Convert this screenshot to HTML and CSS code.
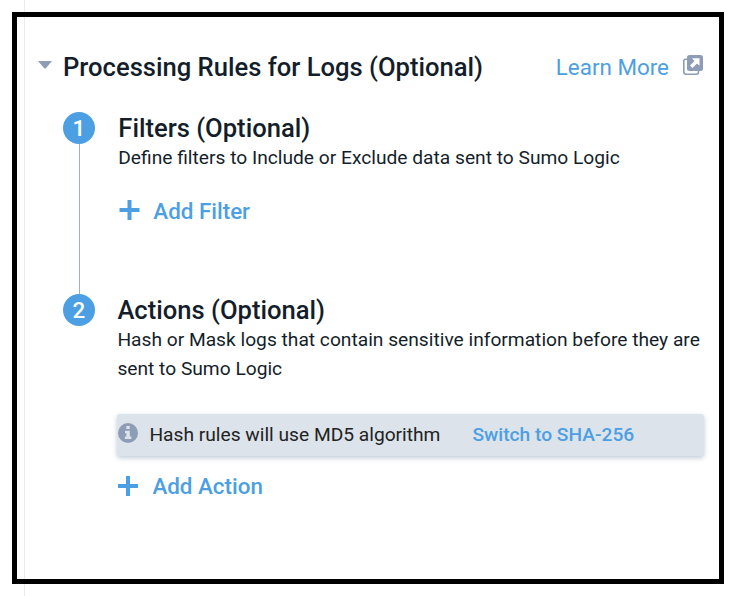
FILE: index.html
```html
<!DOCTYPE html>
<html lang="en">
<head>
<meta charset="utf-8">
<title>Processing Rules</title>
<link rel="stylesheet" href="styles.css">
</head>
<body>
<main class="panel">
  <header class="header">
    <svg class="caret" width="14" height="8" viewBox="0 0 14 8"><path d="M0 0H14L7.8 7.2Q7 8 6.2 7.2Z"/></svg>
    <h1 class="title">Processing Rules for Logs (Optional)</h1>
    <a class="learn">Learn More</a>
    <svg class="external" width="20" height="20" viewBox="0 0 20 20">
      <path d="M4 4.2H2.5Q.8 4.2.8 6V17Q.8 19.2 3 19.2H13.5Q15.5 19.2 15.5 17V16" fill="none" stroke="#8d9db5" stroke-width="1.6"/>
      <rect x="4" y="0" width="16" height="16" rx="2.5" fill="#8d9db5"/>
      <path d="M9 3.3H16.5V10.8L14 8.4L9.4 13L7 10.6L11.5 6Z" fill="#fff"/>
    </svg>
  </header>
  <section class="step first">
    <div class="rail"><span class="number">1</span><span class="line"></span></div>
    <div class="content">
      <h2 class="heading">Filters (Optional)</h2>
      <p class="text">Define filters to Include or Exclude data sent to Sumo Logic</p>
      <a class="add add-filter"><svg width="21" height="20" viewBox="0 0 21 20"><path d="M8.5 0h4v8h8v4h-8v8h-4v-8h-8V8h8z"/></svg><span>Add Filter</span></a>
    </div>
  </section>
  <section class="step second">
    <div class="rail"><span class="number">2</span></div>
    <div class="content">
      <h2 class="heading">Actions (Optional)</h2>
      <p class="text">Hash or Mask logs that contain sensitive information before they are<br>sent to Sumo Logic</p>
      <div class="notice">
        <svg class="info" width="20" height="20" viewBox="0 0 20 20"><circle cx="10" cy="10" r="10" fill="#8d9db5"/><path d="M8.4 3h3.3v3H8.4zM7 7.7h4.8v5.8h1.5v2.6H6.9v-2.6h1.5v-3.2H7z" fill="#dce3ea"/></svg>
        <span class="message">Hash rules will use MD5 algorithm</span>
        <a class="switch">Switch to SHA-256</a>
      </div>
      <a class="add add-action"><svg width="20" height="20" viewBox="0 0 20 20"><path d="M8 0h4v8h8v4h-8v8H8v-8H0V8h8z"/></svg><span>Add Action</span></a>
    </div>
  </section>
</main>
</body>
</html>
```
FILE: styles.css
```css
* { box-sizing: border-box; }
body {
  margin: 0;
  height: 596px;
  padding: 12px;
  overflow: hidden;
  font-family: Roboto, sans-serif;
  color: #141e2b;
  background: linear-gradient(#e9eaec, #e9eaec) 24px 0 / 1px 100% no-repeat #fff;
}
h1, h2, p { margin: 0; }
.panel {
  width: 712px;
  height: 572px;
  border: 5px solid #000;
  padding: 35px 15px 0 21.4px;
}
.header { display: flex; align-items: center; height: 30px; }
.caret { fill: #8d9db5; margin: 0 10.6px 4px 0; }
.title, .heading { font-size: 25.6px; line-height: 32px; font-weight: 500; white-space: nowrap; }
.title { flex: 1; }
.learn { color: #4c9fe2; font-size: 22.4px; line-height: 28px; margin-right: 14px; }
.external { margin: 0 1px 5px 0; }
.step { display: flex; padding-left: 24.6px; }
.first { height: 182px; margin-top: 30px; }
.rail { width: 32px; display: flex; flex-direction: column; margin-right: 23.3px; }
.second .rail { margin-right: 22.4px; }
.number {
  width: 32px;
  height: 32px;
  border-radius: 50%;
  background: #4c9fe2;
  color: #fff;
  font-size: 22.4px;
  font-weight: 500;
  line-height: 33px;
  text-align: center;
}
.line { width: 1px; flex: 1; background: #a3afc0; margin-left: 16px; }
.content { flex: 1; min-width: 0; }
.text { font-size: 19.2px; line-height: 29px; margin-top: -1px; white-space: nowrap; }
.add {
  display: flex;
  align-items: center;
  gap: 14px;
  height: 28px;
  margin-left: 1px;
  font-size: 22.4px;
  line-height: 28px;
  font-weight: 500;
  color: #4c9fe2;
}
.add svg { fill: #4c9fe2; margin-bottom: 1px; }
.add-filter { margin-top: 25px; gap: 13px; }
.add-filter svg { margin-bottom: 2px; }
.notice {
  display: flex;
  align-items: center;
  width: 586.6px;
  height: 42px;
  margin-top: 31px;
  padding: 0 2px 1px 1px;
  border-radius: 3px;
  background: #dce3ea;
  box-shadow: 0 2px 5px rgba(75, 105, 140, .35);
  font-size: 19.2px;
  line-height: 24px;
  white-space: nowrap;
}
.info { margin: 0 11px 3px 0; }
.message { color: #222; }
.switch { color: #4c9fe2; font-weight: 500; margin-left: 32px; }
.add-action { margin-top: 16px; }
```
